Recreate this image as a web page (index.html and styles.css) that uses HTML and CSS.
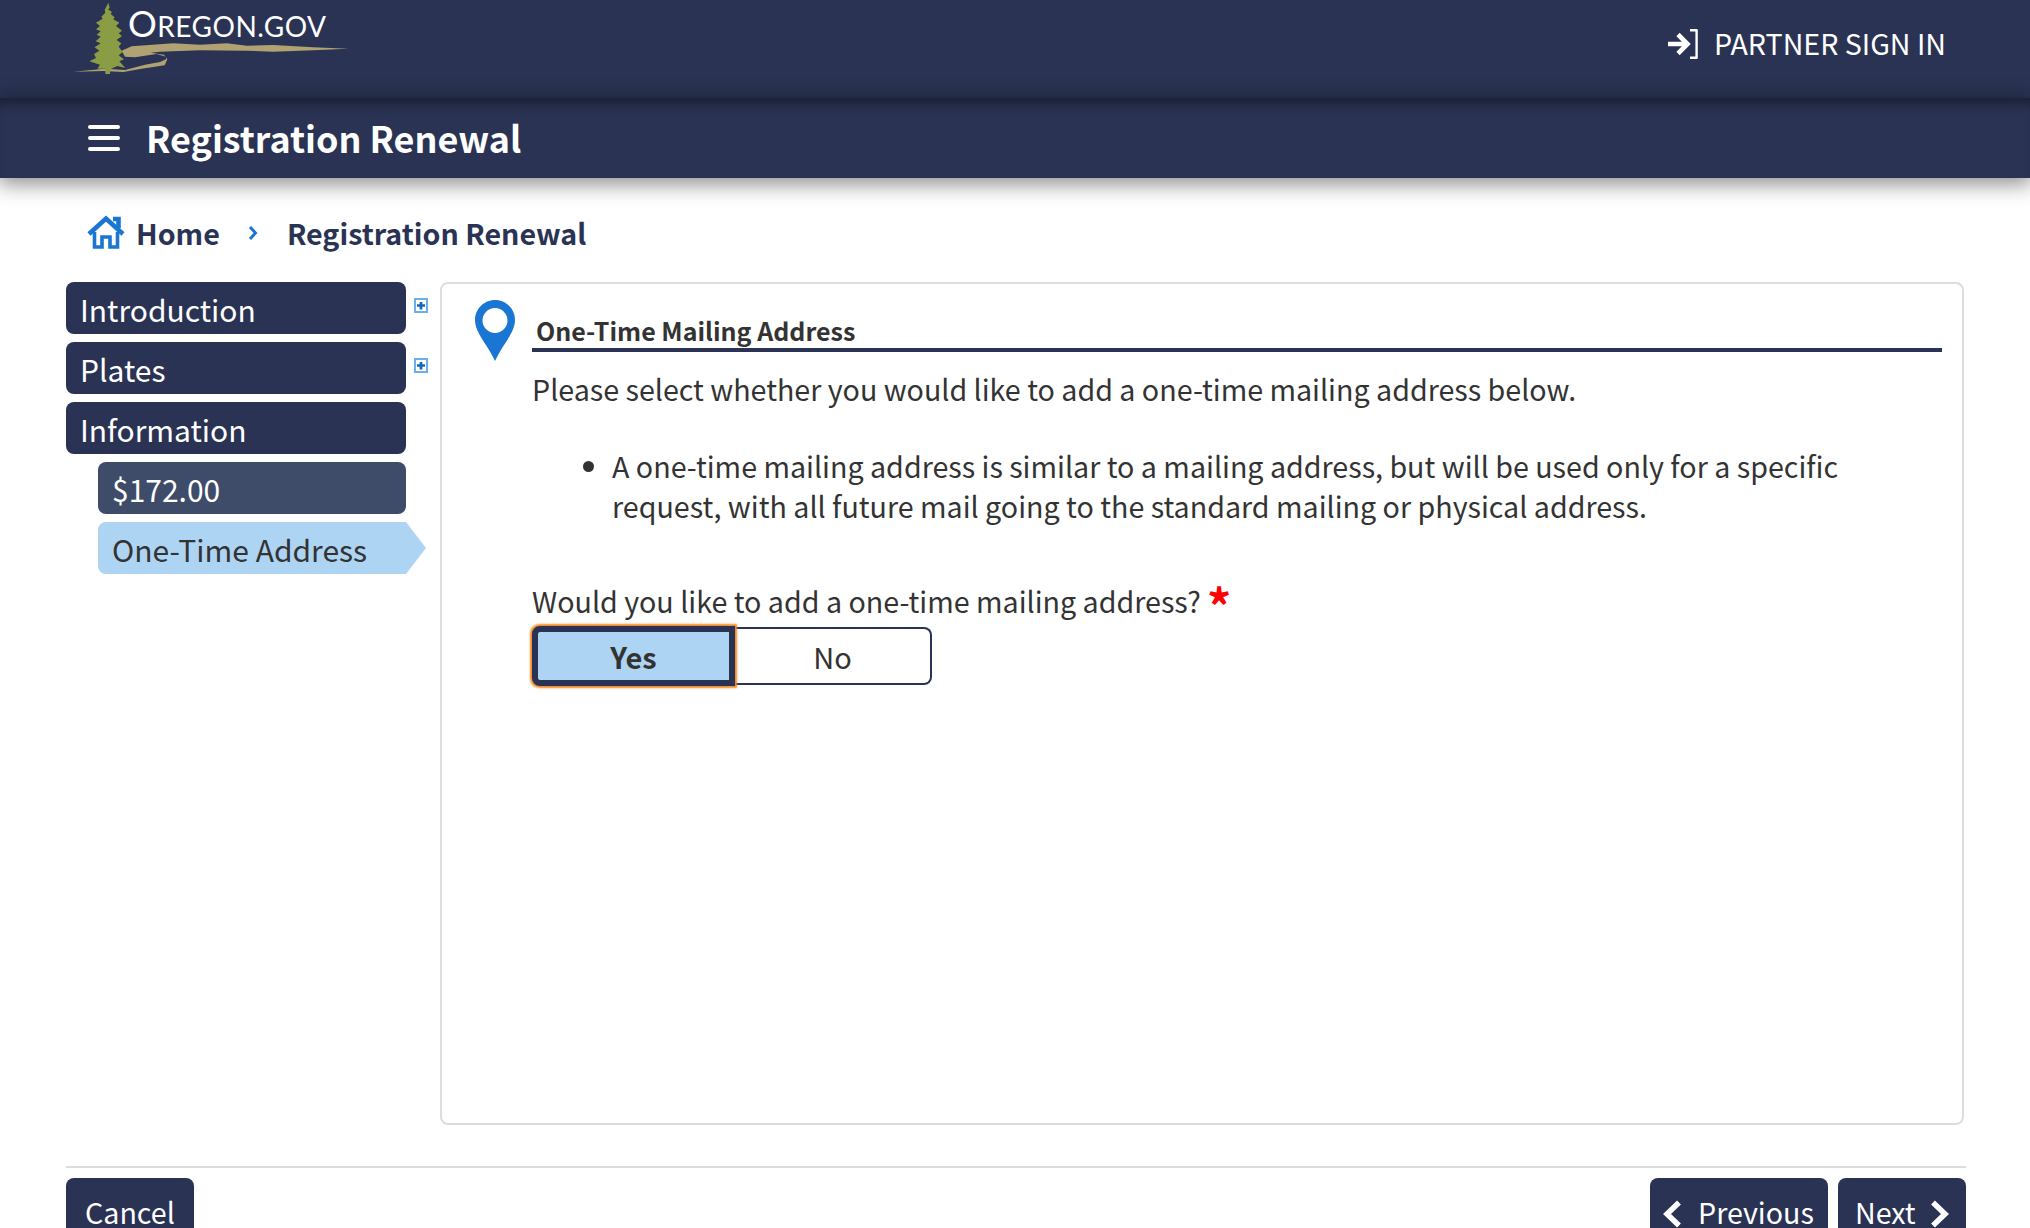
FILE: index.html
```html
<!DOCTYPE html>
<html lang="en">
<head>
<meta charset="utf-8">
<title>Registration Renewal</title>
<link rel="stylesheet" href="styles.css">
</head>
<body>
<header class="topbar">
  <a class="logo">
    <svg class="logo-art" viewBox="0 0 900 270" width="300" height="90" aria-hidden="true">
      <path fill="#b0a273" d="M40 215 L135 206 L195 210 L255 194 L300 186 L318 178 L318 170 L290 162 L225 172 L195 170 L185 152 L215 139 L340 130 L420 134 L500 130 L560 137 L640 135 L760 142 L865 146 L760 151 L640 155 L560 152 L420 151 L300 155 L272 158 L312 164 L322 178 L314 196 L245 206 L190 216 L130 213 Z"/>
      <path fill="#8b9d44" d="M145 8 L149 24 L144 28 L156 36 L152 42 L164 52 L160 58 L178 68 L168 78 L186 92 L176 100 L186 108 L170 120 L184 130 L176 140 L188 156 L176 166 L192 178 L178 184 L196 204 L172 198 L151 208 L150 222 L136 222 L136 206 L112 206 L120 194 L88 184 L108 174 L102 162 L118 152 L104 142 L122 130 L107 124 L122 110 L110 104 L122 94 L108 88 L120 78 L108 68 L128 56 L124 50 L136 38 L134 30 Z"/>
    </svg>
    <span class="logo-text"><span class="logo-cap">O</span>REGON.GOV</span>
  </a>
  <a class="signin">
    <svg class="signin-icon" viewBox="0 0 30 30" width="30" height="30" aria-hidden="true">
      <path d="M0 15 H19 M10 5.5 L19.5 15 L10 24.5" fill="none" stroke="#fff" stroke-width="4.6"/>
      <path d="M22 1.2 H28.6 V28.8 H22" fill="none" stroke="#fff" stroke-width="2.4" stroke-linejoin="round"/>
    </svg>
    <span class="signin-label">PARTNER SIGN IN</span>
  </a>
</header>
<div class="subbar">
  <svg class="burger" viewBox="0 0 32 28" width="32" height="28" aria-hidden="true">
    <path d="M2 3 H30 M2 14 H30 M2 25 H30" stroke="#fff" stroke-width="4" stroke-linecap="round"/>
  </svg>
  <h1 class="app-title">Registration Renewal</h1>
</div>
<nav class="crumbs">
  <svg class="home-icon" viewBox="0 0 38 34" width="38" height="34" aria-hidden="true">
    <path d="M2 19 L19 3.5 L36 19" fill="none" stroke="#1976d2" stroke-width="4.6"/>
    <path d="M26 4 H31.5 V13" fill="none" stroke="#1976d2" stroke-width="4.6"/>
    <path d="M7.5 17 V32 H15 V22 H23 V32 H30.5 V17" fill="none" stroke="#1976d2" stroke-width="3.6"/>
  </svg>
  <span class="crumb">Home</span>
  <svg class="crumb-sep" viewBox="0 0 10 16" width="10" height="16" aria-hidden="true">
    <path d="M2 2 L7.5 8 L2 14" fill="none" stroke="#1976d2" stroke-width="3"/>
  </svg>
  <span class="crumb">Registration Renewal</span>
</nav>
<main class="layout">
  <aside class="steps">
    <div class="step-row"><div class="step">Introduction</div><span class="plus"><i></i></span></div>
    <div class="step-row"><div class="step">Plates</div><span class="plus"><i></i></span></div>
    <div class="step-row"><div class="step">Information</div></div>
    <div class="step-row sub"><div class="step fee">$172.00</div></div>
    <div class="step-row sub"><div class="step current">One-Time Address</div></div>
  </aside>
  <section class="panel">
    <svg class="pin" viewBox="0 0 40 61" width="40" height="61" aria-hidden="true">
      <path fill="#1976d2" fill-rule="evenodd" d="M20 0 C9 0 0 9 0 20 C0 33 13 45 20 61 C27 45 40 33 40 20 C40 9 31 0 20 0 Z M20 8 A12.5 12.5 0 1 1 20 33 A12.5 12.5 0 1 1 20 8 Z"/>
    </svg>
    <div class="panel-body">
      <h2 class="panel-title">One-Time Mailing Address</h2>
      <p class="intro">Please select whether you would like to add a one-time mailing address below.</p>
      <ul class="notes">
        <li>A one-time mailing address is similar to a mailing address, but will be used only for a specific request, with all future mail going to the standard mailing or physical address.</li>
      </ul>
      <div class="question">Would you like to add a one-time mailing address? <span class="req">*</span></div>
      <div class="toggle">
        <button class="opt yes">Yes</button>
        <button class="opt no">No</button>
      </div>
    </div>
  </section>
</main>
<footer class="actions">
  <button class="btn cancel">Cancel</button>
  <div class="nav-btns">
    <button class="btn prev"><svg viewBox="0 0 20 28" width="20" height="28" aria-hidden="true"><path d="M17 2.5 L5 14 L17 25.5" fill="none" stroke="#fff" stroke-width="5.5"/></svg>Previous</button>
    <button class="btn next">Next<svg viewBox="0 0 20 28" width="20" height="28" aria-hidden="true"><path d="M3 2.5 L15 14 L3 25.5" fill="none" stroke="#fff" stroke-width="5.5"/></svg></button>
  </div>
</footer>
</body>
</html>
```
FILE: styles.css
```css
* { box-sizing: border-box; }
html, body { margin: 0; height: 100%; overflow: hidden; background: #fff; }
body { font-family: "Noto Sans CJK SC", "Noto Sans", sans-serif; color: #333; font-size: 28.65px; }

.topbar { height: 98px; background: #2a3353; display: flex; justify-content: space-between; padding: 0 84px 0 60px; }
.logo { position: relative; display: block; width: 300px; height: 90px; }
.logo-art { display: block; }
.logo-text { position: absolute; left: 68px; top: 3px; font-family: Lato, sans-serif; font-size: 28px; line-height: 40px; color: #fff; letter-spacing: 0.5px; white-space: nowrap; }
.logo-cap { font-size: 36px; }
.signin { display: flex; align-items: center; gap: 16px; height: 88px; color: #fff; font-size: 28.6px; }
.signin-label { padding-bottom: 3px; }
.signin-icon { display: block; }

.subbar { height: 80px; background: #2a3353; display: flex; align-items: center; padding-left: 88px; gap: 26px; position: relative; box-shadow: inset 0 14px 12px -8px #1a2035, 0 4px 20px 2px rgba(0,0,0,.45); }
.burger { display: block; }
.app-title { margin: 0; padding-bottom: 2px; font-size: 35.9px; font-weight: 700; color: #fff; line-height: 50px; }

.crumbs { height: 104px; padding: 4px 0 0 87px; display: flex; align-items: center; color: #2a3353; }
.home-icon { display: block; margin-right: 11px; }
.crumb { font-weight: 700; font-size: 28.65px; }
.crumb-sep { margin: 2px 29px 0 28px; }

.layout { display: grid; grid-template-columns: 374px 1524px; margin-left: 66px; }
.steps { display: flex; flex-direction: column; gap: 8px; }
.step-row { display: flex; width: 362px; gap: 8px; }
.step-row.sub { padding-left: 32px; }
.step { width: 340px; flex: none; height: 52px; background: #2a3353; color: #fff; border-radius: 8px; padding: 1px 0 0 14px; line-height: 52px; font-size: 30px; }
.sub .step { width: 308px; }
.step.fee { background: #3e4c6a; }
.step.current { background: #aed4f4; color: #333; position: relative; border-radius: 8px 0 0 8px; }
.step.current::after { content: ""; position: absolute; left: 100%; top: 0; border-left: 20px solid #aed4f4; border-top: 26px solid transparent; border-bottom: 26px solid transparent; }
.plus { width: 14px; height: 15px; margin-top: 16px; border: 2px solid #6ab0ea; background: #fff; display: flex; align-items: center; justify-content: center; }
.plus i { width: 8px; height: 8px; background: #1568b8; clip-path: polygon(33% 0, 67% 0, 67% 33%, 100% 33%, 100% 67%, 67% 67%, 67% 100%, 33% 100%, 33% 67%, 0 67%, 0 33%, 33% 33%); }

.panel { height: 843px; border: 2px solid #ddd; border-radius: 8px; display: flex; padding: 16px 20px 0 33px; }
.pin { flex: none; display: block; margin-right: 17px; }
.panel-body { flex: 1; min-width: 0; }
.panel-title { margin: 0; height: 52px; border-bottom: 4px solid #2a3353; padding: 12px 0 0 4px; font-size: 25px; line-height: 36px; font-weight: 700; color: #333; }
.intro { margin: 15px 0 0; line-height: 44px; }
.notes { margin: 35px 0 0; padding: 0 0 0 80px; line-height: 40px; }
.notes li { width: 1300px; }
.question { margin-top: 53px; line-height: 44px; display: flex; gap: 6px; }
.req { color: #f00; font-size: 48px; line-height: 44px; font-weight: 700; margin: 3px 0 -3px; }
.toggle { display: flex; margin-top: 3px; width: 400px; height: 60px; align-items: center; }
.opt { font: inherit; color: #333; font-size: 29px; padding: 0; background: #fff; cursor: pointer; }
.opt.yes { width: 203px; height: 60px; background: #aed4f4; border: 6px solid #2a3353; border-radius: 8px 0 0 8px; font-weight: 700; box-shadow: 0 0 2px 1.5px #f08a24; position: relative; z-index: 1; }
.opt.no { width: 197px; height: 58px; border: 2px solid #2a3353; border-left: 0; border-radius: 0 8px 8px 0; }

.actions { margin: 41px 0 0 66px; width: 1900px; border-top: 2px solid #ddd; padding-top: 10px; display: flex; justify-content: space-between; }
.nav-btns { display: flex; gap: 10px; }
.btn { font: inherit; font-size: 28.65px; height: 60px; border: 0; border-radius: 8px; background: #2a3353; color: #fff; padding: 14px 20px 0; line-height: 40px; display: flex; align-items: flex-start; gap: 16px; }
.btn svg { display: block; margin-top: 8px; flex: none; }
.btn.cancel { width: 128px; padding-left: 19px; }
.btn.prev { width: 178px; padding-left: 12px; }
.btn.next { width: 128px; padding-left: 17px; gap: 14px; }
```
